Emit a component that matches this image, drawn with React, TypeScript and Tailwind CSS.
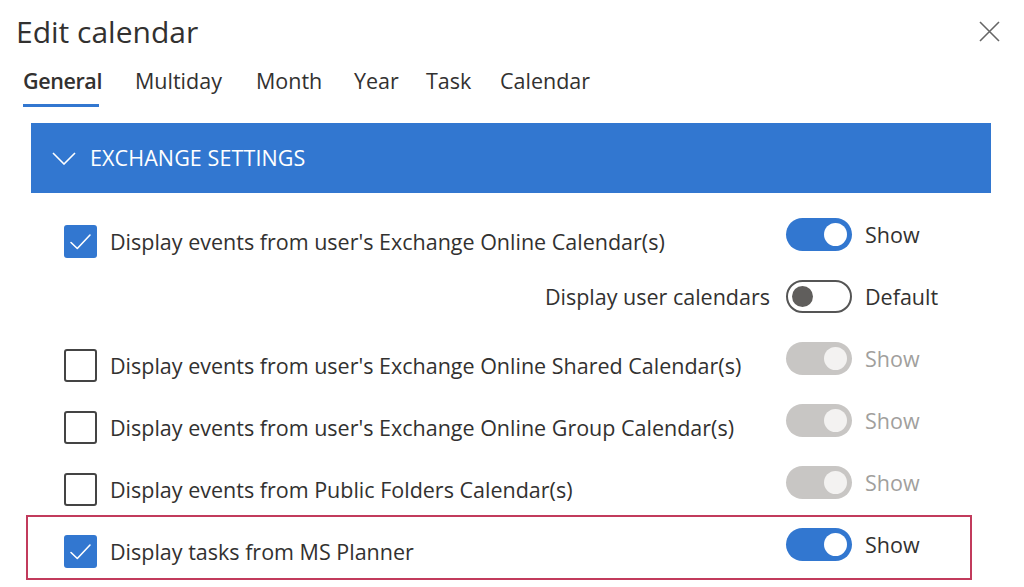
import React from 'react';

const font = { fontFamily: '"Open Sans", "Noto Sans", sans-serif' };

function Checkbox({ checked }: { checked: boolean }) {
  if (checked) {
    return (
      <div className="w-[33px] h-[33px] rounded-[3px] bg-[#3277d0] shrink-0">
        <svg width="33" height="33" viewBox="0 0 33 33" fill="none">
          <path d="M7 17.5 L13.3 23.5 L26 10" stroke="white" strokeWidth="1.6" strokeLinecap="round" strokeLinejoin="round" />
        </svg>
      </div>
    );
  }
  return <div className="w-[33px] h-[33px] rounded-[3px] border-2 border-[#444] bg-white shrink-0" />;
}

type ToggleState = 'on' | 'off' | 'disabled';

function Toggle({ state }: { state: ToggleState }) {
  if (state === 'on') {
    return (
      <div className="w-[66px] h-[33px] rounded-full bg-[#3277d0] flex items-center justify-end pr-[5px] shrink-0">
        <div className="w-[23px] h-[23px] rounded-full bg-white" />
      </div>
    );
  }
  if (state === 'disabled') {
    return (
      <div className="w-[66px] h-[33px] rounded-full bg-[#c8c6c4] flex items-center justify-end pr-[5px] shrink-0">
        <div className="w-[23px] h-[23px] rounded-full bg-[#f3f2f1]" />
      </div>
    );
  }
  return (
    <div className="w-[66px] h-[33px] rounded-full border-2 border-[#555] bg-white flex items-center pl-[4px] shrink-0">
      <div className="w-[21px] h-[21px] rounded-full bg-[#605e5c]" />
    </div>
  );
}

type Row = {
  label?: string;
  rightLabel?: string;
  checked?: boolean;
  toggle: ToggleState;
  toggleText: string;
  highlight?: boolean;
};

const rows: Row[] = [
  { label: "Display events from user's Exchange Online Calendar(s)", checked: true, toggle: 'on', toggleText: 'Show' },
  { rightLabel: 'Display user calendars', toggle: 'off', toggleText: 'Default' },
  { label: "Display events from user's Exchange Online Shared Calendar(s)", checked: false, toggle: 'disabled', toggleText: 'Show' },
  { label: "Display events from user's Exchange Online Group Calendar(s)", checked: false, toggle: 'disabled', toggleText: 'Show' },
  { label: 'Display events from Public Folders Calendar(s)', checked: false, toggle: 'disabled', toggleText: 'Show' },
  { label: 'Display tasks from MS Planner', checked: true, toggle: 'on', toggleText: 'Show', highlight: true },
];

// tab label + the slot width it takes in the strip
const tabs = [
  { name: 'General', w: 'w-[112px]' },
  { name: 'Multiday', w: 'w-[121px]' },
  { name: 'Month', w: 'w-[98px]' },
  { name: 'Year', w: 'w-[72px]' },
  { name: 'Task', w: 'w-[74px]' },
  { name: 'Calendar', w: 'w-[100px]' },
];

export default function App() {
  return (
    <div className="w-[1024px] h-[587px] bg-white text-[#323130] relative overflow-hidden" style={font}>
      {/* Title */}
      <div className="flex items-start justify-between pl-[16px] pr-[24px] pt-[12px]">
        <h1 className="text-[30px] leading-[40px] font-normal">Edit calendar</h1>
        <svg className="mt-[9px]" width="21" height="21" viewBox="0 0 21 21" fill="none">
          <path d="M1 1 L20 20 M20 1 L1 20" stroke="#666" strokeWidth="1.6" />
        </svg>
      </div>

      {/* Tabs */}
      <div className="flex pl-[23px] mt-[15px] text-[21.5px] leading-[28px]">
        {tabs.map((t, i) => (
          <div key={t.name} className={`flex flex-col ${t.w}`}>
            <span className={i === 0 ? 'font-semibold tracking-[-0.4px]' : ''}>{t.name}</span>
            {i === 0 && <div className="h-[3px] bg-[#3277d0] mt-[9px] w-[76px]" />}
          </div>
        ))}
      </div>

      {/* Section header */}
      <div className="mx-[31px] mt-[16px] w-[960px] h-[70px] bg-[#3277d0] flex items-center pl-[21px] text-white">
        <svg width="24" height="13" viewBox="0 0 24 13" fill="none">
          <path d="M1 1 L12 12 L23 1" stroke="white" strokeWidth="1.6" />
        </svg>
        <span className="ml-[14px] text-[21.5px] tracking-[0.1px]">EXCHANGE SETTINGS</span>
      </div>

      {/* Rows */}
      <div className="mt-[10px] flex flex-col">
        {rows.map((r, i) => (
          <div
            key={i}
            className={
              r.highlight
                ? 'ml-[26px] mt-[2px] w-[946px] h-[65px] border-2 border-[#c23b5c] flex items-start pl-[36px] pt-[11px]'
                : 'ml-[26px] w-[946px] h-[62px] border-2 border-transparent flex items-start pl-[36px] pt-[13px]'
            }
          >
            <div className="flex-1 flex items-center mt-[7px]">
              {r.label && (
                <>
                  <Checkbox checked={!!r.checked} />
                  <span className="ml-[13px] text-[21.5px] leading-[33px] whitespace-nowrap">{r.label}</span>
                </>
              )}
              {r.rightLabel && (
                <span className="ml-auto mr-[16px] -mt-[7px] text-[21.5px] leading-[33px]">{r.rightLabel}</span>
              )}
            </div>
            <div className="w-[184px] flex items-center">
              <Toggle state={r.toggle} />
              <span
                className={
                  r.toggle === 'disabled'
                    ? 'ml-[13px] text-[21.5px] leading-[33px] text-[#a19f9d]'
                    : 'ml-[13px] text-[21.5px] leading-[33px]'
                }
              >
                {r.toggleText}
              </span>
            </div>
          </div>
        ))}
      </div>
    </div>
  );
}
